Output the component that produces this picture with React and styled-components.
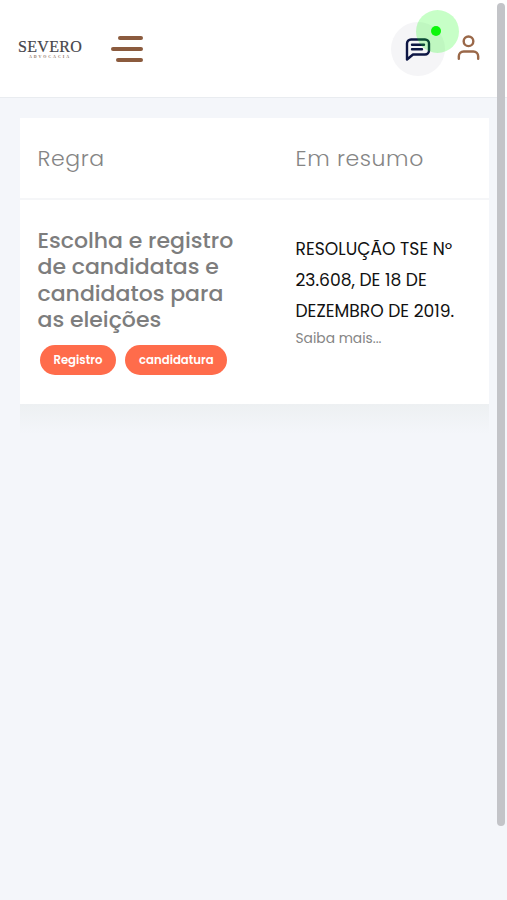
import React from "react";
import styled, { createGlobalStyle } from "styled-components";

const GlobalStyle = createGlobalStyle`
  * {
    box-sizing: border-box;
  }
  body {
    margin: 0;
    background: #f4f6fa;
    font-family: Poppins, Inter, "Open Sans", sans-serif;
    overflow: hidden;
  }
`;

const Page = styled.div`
  position: relative;
  height: 900px;
`;

const Header = styled.header`
  display: flex;
  align-items: center;
  height: 98px;
  padding: 0 24px 0 18px;
  background: #fff;
  border-bottom: 1px solid #e9ecf0;
`;

const Logo = styled.div`
  width: 64px;
  margin-right: 29px;
  font-family: "Liberation Serif", serif;
  text-align: center;
`;

const LogoName = styled.div`
  color: #45454b;
  font-size: 16px;
  line-height: 16px;
  white-space: nowrap;
  letter-spacing: 0.3px;
  -webkit-text-stroke: 0.2px #45454b;
`;

const LogoSub = styled.div`
  color: #8f7668;
  font-size: 4px;
  font-weight: bold;
  line-height: 4px;
  letter-spacing: 1.9px;
`;

const MenuButton = styled.div`
  display: flex;
  flex-direction: column;
  align-items: flex-end;
  gap: 7px;
  width: 32px;
`;

const Bar = styled.span`
  width: ${(props) => props.$width}px;
  height: 4px;
  border-radius: 2px;
  background: #8b5b3e;
`;

const Actions = styled.div`
  display: flex;
  align-items: center;
  gap: 9.5px;
  margin-left: auto;
`;

const ChatButton = styled.div`
  position: relative;
  display: flex;
  align-items: center;
  justify-content: center;
  width: 54px;
  height: 54px;
  border-radius: 50%;
  background: #f5f5f7;
`;

const Pulse = styled.span`
  position: absolute;
  top: -12px;
  right: -14px;
  width: 43px;
  height: 43px;
  border-radius: 50%;
  background: rgba(0, 255, 0, 0.22);
`;

const Dot = styled.span`
  position: absolute;
  top: 4px;
  right: 4px;
  width: 10px;
  height: 10px;
  border-radius: 50%;
  background: #0cf60c;
`;

const Card = styled.main`
  width: 469px;
  height: 286px;
  margin: 20px 0 0 19.5px;
  background: #fff;
`;

const CardShadow = styled.div`
  width: 469px;
  height: 30px;
  margin-left: 19.5px;
  background: linear-gradient(#edf0f2, #f4f6fa);
`;

const Row = styled.div`
  display: grid;
  grid-template-columns: 258px 1fr;
  padding-left: 18px;
`;

const HeadRow = styled(Row)`
  height: 82px;
  align-items: center;
  border-bottom: 2px solid #f5f6f8;
`;

const Heading = styled.div`
  color: #858585;
  font-size: 22px;
  font-weight: 300;
  letter-spacing: 0.6px;
`;

const Rule = styled.div`
  padding-top: 28px;
`;

const Title = styled.h4`
  margin: 0;
  color: #7d7d7d;
  font-size: 22px;
  font-weight: 500;
  line-height: 26.4px;
  white-space: nowrap;
`;

const Tags = styled.div`
  display: flex;
  gap: 9.5px;
  margin: 11px 0 0 2.4px;
`;

const Tag = styled.span`
  width: ${(props) => props.$width}px;
  height: 30px;
  border-radius: 15px;
  background: #ff6c4b;
  color: #fff;
  font-size: 11.7px;
  font-weight: 600;
  line-height: 30px;
  text-align: center;
`;

const Summary = styled.div`
  padding-top: 34px;
`;

const Resolution = styled.p`
  margin: 0;
  color: #111;
  font-size: 17.15px;
  line-height: 31px;
  white-space: nowrap;
`;

const Line = styled.span`
  display: block;
`;

const More = styled.div`
  color: #858585;
  font-size: 13.8px;
  line-height: 23px;
`;

const ScrollThumb = styled.div`
  position: absolute;
  top: 3px;
  right: 2px;
  width: 8px;
  height: 823px;
  border-radius: 4px;
  background: #c3c4c8;
`;

const ChatIcon = () => (
  <svg width="26" height="26" viewBox="0 0 26 26" fill="none" stroke="#0d1644" strokeWidth="2.4" strokeLinecap="round" strokeLinejoin="round">
    <path d="M2 23.5V7.5a4 4 0 0 1 4-4h14a4 4 0 0 1 4 4v7a4 4 0 0 1-4 4H8z" />
    <path d="M7 8.8h12M7 13.3h10" />
  </svg>
);

const UserIcon = () => (
  <svg width="29" height="29" viewBox="0 0 24 24" fill="none" stroke="#9a6849" strokeWidth="2" strokeLinecap="round" strokeLinejoin="round">
    <path d="M20 20.5v-2a4 4 0 0 0-4-4H8a4 4 0 0 0-4 4v2" />
    <circle cx="12" cy="6" r="4" />
  </svg>
);

const App = () => {
  return (
    <Page>
      <GlobalStyle />
      <Header>
        <Logo>
          <LogoName>SEVERO</LogoName>
          <LogoSub>ADVOCACIA</LogoSub>
        </Logo>
        <MenuButton>
          <Bar $width={25} />
          <Bar $width={32} />
          <Bar $width={27} />
        </MenuButton>
        <Actions>
          <ChatButton>
            <ChatIcon />
            <Pulse />
            <Dot />
          </ChatButton>
          <UserIcon />
        </Actions>
      </Header>
      <Card>
        <HeadRow>
          <Heading>Regra</Heading>
          <Heading>Em resumo</Heading>
        </HeadRow>
        <Row>
          <Rule>
            <Title>
              <Line>Escolha e registro</Line>
              <Line>de candidatas e</Line>
              <Line>candidatos para</Line>
              <Line>as eleições</Line>
            </Title>
            <Tags>
              <Tag $width={76}>Registro</Tag>
              <Tag $width={102}>candidatura</Tag>
            </Tags>
          </Rule>
          <Summary>
            <Resolution>
              <Line>RESOLUÇÃO TSE Nº</Line>
              <Line>23.608, DE 18 DE</Line>
              <Line>DEZEMBRO DE 2019.</Line>
            </Resolution>
            <More>Saiba mais...</More>
          </Summary>
        </Row>
      </Card>
      <CardShadow />
      <ScrollThumb />
    </Page>
  );
};

export default App;
